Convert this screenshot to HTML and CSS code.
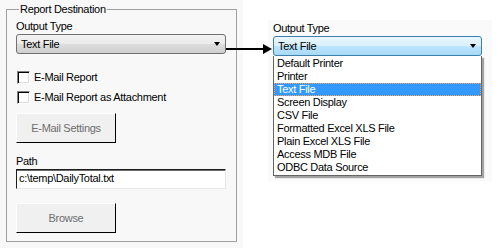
FILE: index.html
```html
<!DOCTYPE html>
<html lang="en">
<head>
    <meta charset="UTF-8">
    <meta name="viewport" content="width=device-width, initial-scale=1.0">
    <title>Report Destination</title>
    <link rel="stylesheet" href="styles.css">
</head>
<body>
    <div class="page">
        <div class="left-panel">
            <fieldset class="group">
                <legend>Report Destination</legend>
                <div class="field-label">Output Type</div>
                <div class="combo">
                    <span>Text File</span>
                    <span class="caret"></span>
                </div>
                <label class="check first"><span class="box"></span>E-Mail Report</label>
                <label class="check"><span class="box"></span>E-Mail Report as Attachment</label>
                <div class="btn settings">E-Mail Settings</div>
                <div class="field-label path-label">Path</div>
                <div class="textbox">c:\temp\DailyTotal.txt</div>
                <div class="btn browse">Browse</div>
            </fieldset>
        </div>

        <div class="right-panel">
            <div class="field-label top">Output Type</div>
            <div class="combo open">
                <span>Text File</span>
                <span class="caret"></span>
            </div>
            <ul class="list">
                <li>Default Printer</li>
                <li>Printer</li>
                <li class="selected">Text File</li>
                <li>Screen Display</li>
                <li>CSV File</li>
                <li>Formatted Excel XLS File</li>
                <li>Plain Excel XLS File</li>
                <li>Access MDB File</li>
                <li>ODBC Data Source</li>
            </ul>
        </div>

        <!-- arrow from the closed combo to the opened one -->
        <svg class="pointer" width="47" height="10" viewBox="0 0 47 10">
            <rect x="0" y="4" width="40" height="2" fill="#000"/>
            <polygon points="37,0 46,5 37,10" fill="#000"/>
        </svg>
    </div>
</body>
</html>
```

FILE: styles.css
```css
body {
    margin: 0;
    background: #fff;
    color: #000;
    font-family: "Liberation Sans", Arial, sans-serif;
    font-size: 11px;
    line-height: 13px;
    letter-spacing: -0.3px;
}
.page {
    position: relative;
    display: flex;
    align-items: flex-start;
    width: 500px;
    height: 248px;
    overflow: hidden;
}
.left-panel {
    width: 243px;
    height: 248px;
    box-sizing: border-box;
    padding: 3px 0 0 6px;
    background: #f8f8f8;
}
.group {
    width: 231px;
    box-sizing: border-box;
    margin: 0;
    padding: 0 10px 8px 9px;
    border: 1px solid #a0a0a0;
}
.group legend {
    margin-left: 3px;
    padding: 0 1px;
    line-height: 13px;
}
.field-label {
    margin-top: 4px;
    height: 13px;
}
.field-label.top {
    margin-top: 2px;
}
.path-label {
    margin-top: 12px;
}
.combo {
    display: flex;
    align-items: center;
    justify-content: space-between;
    width: 210px;
    height: 20px;
    box-sizing: border-box;
    margin-top: 1px;
    padding: 0 5px 0 4px;
    border: 1px solid #707070;
    border-radius: 3px;
    background: linear-gradient(#f2f2f2 0%, #ebebeb 50%, #dddddd 50%, #cfcfcf 100%);
}
.combo.open {
    width: 209px;
    border-color: #3c7fb1;
    background: linear-gradient(#eaf6fd 0%, #d9f0fc 50%, #bee6fd 50%, #a7d9f5 100%);
}
.caret {
    width: 0;
    height: 0;
    border-left: 3px solid transparent;
    border-right: 3px solid transparent;
    border-top: 4px solid #000;
}
.check {
    display: flex;
    align-items: center;
    gap: 4px;
    height: 13px;
    margin-top: 7px;
    margin-left: 1px;
}
.check.first {
    margin-top: 17px;
}
.box {
    width: 13px;
    height: 13px;
    box-sizing: border-box;
    background: #fff;
    border: 1px solid;
    border-color: #808080 #fff #fff #808080;
    box-shadow: inset 1px 1px 0 #000, inset -1px -1px 0 #dcdcdc;
}
.btn {
    display: flex;
    align-items: center;
    justify-content: center;
    width: 100px;
    height: 30px;
    box-sizing: border-box;
    border: 1px solid;
    border-color: #fdfdfd #000 #000 #fdfdfd;
    background: #f0f0f0;
    color: #6d6d6d;
}
.settings {
    margin-top: 9px;
}
.browse {
    margin-top: 14px;
}
.textbox {
    width: 210px;
    height: 20px;
    box-sizing: border-box;
    margin-top: 1px;
    padding: 2px 0 0 2px;
    background: #fff;
    border: 1px solid;
    border-color: #1e1e1e #e6e6e6 #e6e6e6 #1e1e1e;
    box-shadow: inset 0 1px 0 #6a6a6a;
}
.right-panel {
    width: 224px;
    height: 161px;
    box-sizing: border-box;
    margin: 20px 0 0 25px;
    padding: 0 10px 0 5px;
    background: #fafafa;
}
.list {
    width: 209px;
    box-sizing: border-box;
    margin: 0;
    padding: 1px 0 1px;
    list-style: none;
    background: #fff;
    border: 1px solid #646464;
    border-top: 0;
    box-shadow: 2px 2px 1px rgba(0, 0, 0, 0.35);
}
.list li {
    height: 13px;
    padding-left: 3px;
}
.list .selected {
    background: #3399ff;
    color: #fff;
    outline: 1px dotted #f5a35c;
    outline-offset: -1px;
}
.pointer {
    position: absolute;
    left: 226px;
    top: 44px;
}
```
